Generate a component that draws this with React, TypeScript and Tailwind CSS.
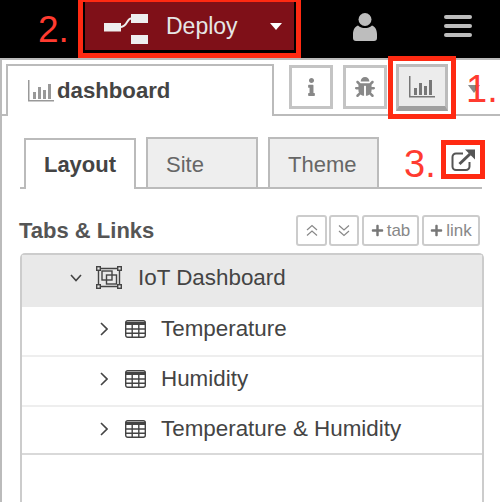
import React from "react";
import { FaBug, FaInfo, FaPlus } from "react-icons/fa";

const Chart = ({ className }: { className?: string }) => (
  <svg viewBox="0 0 26 22" className={className} fill="currentColor">
    <rect x="0" y="0" width="1.5" height="21" />
    <rect x="0" y="20" width="26" height="1.5" />
    <rect x="5" y="12" width="3" height="7" />
    <rect x="10" y="7" width="3" height="12" />
    <rect x="15" y="10" width="3" height="9" />
    <rect x="20" y="4" width="3" height="15" />
  </svg>
);

const TableIcon = () => (
  <svg viewBox="0 0 21 18" className="w-[21px] h-[18px] text-[#444]" fill="none" stroke="currentColor" strokeWidth="1.4">
    <rect x="0.7" y="0.7" width="19.6" height="16.6" rx="2" />
    <path d="M0.75 3.5H20.25" strokeWidth="3" />
    <path d="M0.75 9H20.25M0.75 13.2H20.25M7.2 3V17M13.8 3V17" />
  </svg>
);

const GroupIcon = () => (
  <svg viewBox="0 0 26 23" className="w-[26px] h-[23px] text-[#444]" fill="none" stroke="currentColor" strokeWidth="1.4">
    <rect x="0.7" y="0.7" width="3.6" height="3.6" />
    <rect x="21.7" y="0.7" width="3.6" height="3.6" />
    <rect x="0.7" y="18.7" width="3.6" height="3.6" />
    <rect x="21.7" y="18.7" width="3.6" height="3.6" />
    <path d="M4.5 2.5H21.5M4.5 20.5H21.5M2.5 4.5V18.5M23.5 4.5V18.5" />
    <rect x="6" y="5" width="10" height="9" />
    <rect x="10.5" y="9" width="10" height="9" />
  </svg>
);

const ChevronRight = () => (
  <svg viewBox="0 0 8 14" className="w-[8px] h-[14px] text-[#444]" fill="none" stroke="currentColor" strokeWidth="1.6">
    <path d="M1 1L7 7L1 13" />
  </svg>
);

const ChevronDown = () => (
  <svg viewBox="0 0 12 8" className="w-[12px] h-[8px] text-[#444]" fill="none" stroke="currentColor" strokeWidth="1.6">
    <path d="M1 1L6 6.5L11 1" />
  </svg>
);

const DoubleChevron = ({ up }: { up?: boolean }) => (
  <svg viewBox="0 0 12 13" className="w-[12px] h-[13px] text-[#888]" fill="none" stroke="currentColor" strokeWidth="1.2">
    <path d={up ? "M1 6L6 1.5L11 6M1 11.5L6 7L11 11.5" : "M1 1.5L6 6L11 1.5M1 7L6 11.5L11 7"} />
  </svg>
);

const ExternalLink = () => (
  <svg viewBox="0 0 24 22" className="w-[24px] h-[22px] text-[#555]" fill="none" stroke="currentColor">
    <path d="M12 4.5H5a3.5 3.5 0 0 0-3.5 3.5v9.5A3.5 3.5 0 0 0 5 21h10a3.5 3.5 0 0 0 3.5-3.5V13" strokeWidth="2" />
    <path d="M8.5 15L19 5" strokeWidth="3" />
    <path d="M14 0.5H24V10.5Z" fill="currentColor" stroke="none" />
  </svg>
);

const UserIcon = () => (
  <svg viewBox="0 0 24 28" className="w-[24px] h-[28px] text-[#bdbdbd]" fill="currentColor">
    <circle cx="12" cy="6.5" r="6.5" />
    <path d="M5 12.5c2 2 4.500 2.500 7 2.500s5-.5 7-2.500c3 1 5 4 5 9V25a3 3 0 0 1-3 3H3a3 3 0 0 1-3-3v-3.500c0-5 2-8 5-9z" />
  </svg>
);

const Row = ({ label }: { label: string }) => (
  <div className="h-[50px] flex items-center pb-[4px] border-b-2 border-[#eeeeee] last:h-[48px] last:pb-[2px] last:border-[#d9d9d9]">
    <div className="ml-[78px] flex"><ChevronRight /></div>
    <div className="ml-[17px] flex"><TableIcon /></div>
    <span className="ml-[15px] text-[22.4px] text-[#444]">{label}</span>
  </div>
);

const SmallBtn = ({ children, w }: { children: React.ReactNode; w: string }) => (
  <div className={`${w} h-[31px] border-2 border-[#cccccc] rounded-[3px] flex items-center justify-center gap-[3px] text-[#888] text-[17px]`}>
    {children}
  </div>
);

export default function App() {
  return (
    <div className="relative w-[500px] h-[502px] overflow-hidden bg-white text-[#444]" style={{ fontFamily: '"Liberation Sans", Arial, sans-serif' }}>
      <header className="h-[58px] bg-black flex items-start">
        <span className="ml-[38px] mt-[9px] w-[40px] text-[37px] leading-[42px] text-[#ff3b30]">2.</span>
        <div className="w-[223px] h-[58px] border-[5px] border-t-[2px] border-[#ff2a12] p-[2px] pt-0 pb-[3px]">
          <div className="h-full bg-[#7f1018] flex items-center text-[#e6e6e6]">
            <svg viewBox="0 0 44 31" className="ml-[19px] mt-[7px] w-[44px] h-[31px]" fill="#eeeeee">
              <rect x="0" y="9" width="17" height="8.500" />
              <rect x="27" y="0" width="17" height="9" />
              <rect x="27" y="21" width="17" height="9" />
              <path d="M17 13c6 0 6-8.500 10-8.500" fill="none" stroke="#eeeeee" strokeWidth="2" />
            </svg>
            <span className="ml-[18px] text-[23px]">Deploy</span>
            <span className="ml-[32px] w-0 h-0 border-x-[6.5px] border-x-transparent border-t-[7px] border-t-white" />
          </div>
        </div>
        <div className="flex flex-1 items-start h-[58px]">
          <div className="ml-[52px] mt-[13px] flex"><UserIcon /></div>
          <div className="ml-[67px] mt-[15px] flex flex-col gap-[5px]">
            <div className="w-[28px] h-[4px] rounded-sm bg-[#bdbdbd]" />
            <div className="w-[28px] h-[4px] rounded-sm bg-[#bdbdbd]" />
            <div className="w-[28px] h-[4px] rounded-sm bg-[#bdbdbd]" />
          </div>
        </div>
      </header>

      <div className="h-[444px] border-l-2 border-t-[2px] border-[#bbbbbb]">
        <div className="h-[56px] flex items-end border-b-2 border-[#bbbbbb] pl-[4px] relative">
          <div className="w-[268px] h-[52px] -mb-[2px] bg-white border-2 border-b-0 border-[#bbbbbb] flex items-center">
            <Chart className="ml-[20px] w-[26px] h-[22px] text-[#999]" />
            <span className="ml-[3px] text-[22.200px] font-bold leading-none text-[#444]">dashboard</span>
          </div>
          <div className="ml-[15px] mb-[5px] w-[44px] h-[44px] border-[3px] border-[#c4c4c4] flex items-center justify-center">
            <FaInfo className="w-[9px] h-[18px] text-[#888]" />
          </div>
          <div className="ml-[10px] mb-[5px] w-[44px] h-[44px] border-[3px] border-[#c4c4c4] flex items-center justify-center">
            <FaBug className="w-[20px] h-[20px] text-[#888]" />
          </div>
        </div>

        <div className="mt-[21px] mx-[18px] w-[462px] h-[52px] flex items-end border-b-2 border-[#bbbbbb] pl-[4px]">
          <div className="w-[112px] h-[51px] -mb-[2px] bg-white border-2 border-b-0 border-[#bbbbbb] flex items-center justify-center text-[22px] font-bold">Layout</div>
          <div className="ml-[10px] w-[112px] h-[50px] bg-[#eeeeee] border-2 border-b-0 border-[#bbbbbb] flex items-center pl-[18px] pt-[2px] text-[22px] text-[#666]">Site</div>
          <div className="ml-[10px] w-[111px] h-[50px] bg-[#eeeeee] border-2 border-b-0 border-[#bbbbbb] flex items-center pl-[18px] pt-[2px] text-[22px] text-[#666]">Theme</div>
        </div>

        <div className="mt-[26px] h-[31px] flex items-center pl-[17px]">
          <span className="text-[22px] font-bold text-[#555]">Tabs &amp; Links</span>
          <div className="ml-auto mr-[20px] flex">
            <SmallBtn w="w-[31px]"><DoubleChevron up /></SmallBtn>
            <SmallBtn w="w-[30px] ml-[2px]"><DoubleChevron /></SmallBtn>
            <SmallBtn w="w-[57px] ml-[3px]"><FaPlus className="w-[13px] h-[13px] text-[#777]" />tab</SmallBtn>
            <SmallBtn w="w-[58px] ml-[3px]"><FaPlus className="w-[13px] h-[13px] text-[#777]" />link</SmallBtn>
          </div>
        </div>

        <div className="mt-[7px] ml-[18px] w-[464px] h-[260px] border-2 border-b-0 border-[#cccccc] rounded-t-[5px]">
          <div className="h-[52px] bg-[#e9e9e9] flex items-center pb-[7px]">
            <div className="ml-[48px] flex"><ChevronDown /></div>
            <div className="ml-[14px] flex"><GroupIcon /></div>
            <span className="ml-[16px] text-[22.4px] text-[#444]">IoT Dashboard</span>
          </div>
          <Row label="Temperature" />
          <Row label="Humidity" />
          <Row label="Temperature &amp; Humidity" />
        </div>
      </div>

      {/* Annotations lying over the page */}
      <div className="absolute left-[388px] top-[56px] w-[68px] h-[63px] border-[5px] border-[#ff2a12] bg-white p-[3px]">
        <div className="relative w-full h-full border-[3px] border-b-[5px] border-t-[3px] border-[#bbbbbb] border-b-[#a0a0a0] bg-[#ececec] flex items-center justify-center">
          <Chart className="w-[26px] h-[22px] text-[#777]" />
        </div>
      </div>
      <div className="absolute left-[468px] top-[85px] w-0 h-0 border-x-[6px] border-x-transparent border-t-[8px] border-t-[#888]" />
      <span className="absolute left-[466px] top-[67px] text-[38px] leading-[44px] text-[#ff3b30]">1.</span>
      <span className="absolute left-[404px] top-[142px] text-[38px] leading-[44px] text-[#ff3b30]">3.</span>
      <div className="absolute left-[441px] top-[140px] w-[44px] h-[39px] border-[5px] border-[#ff2a12] bg-white flex items-center justify-center">
        <ExternalLink />
      </div>
    </div>
  );
}
